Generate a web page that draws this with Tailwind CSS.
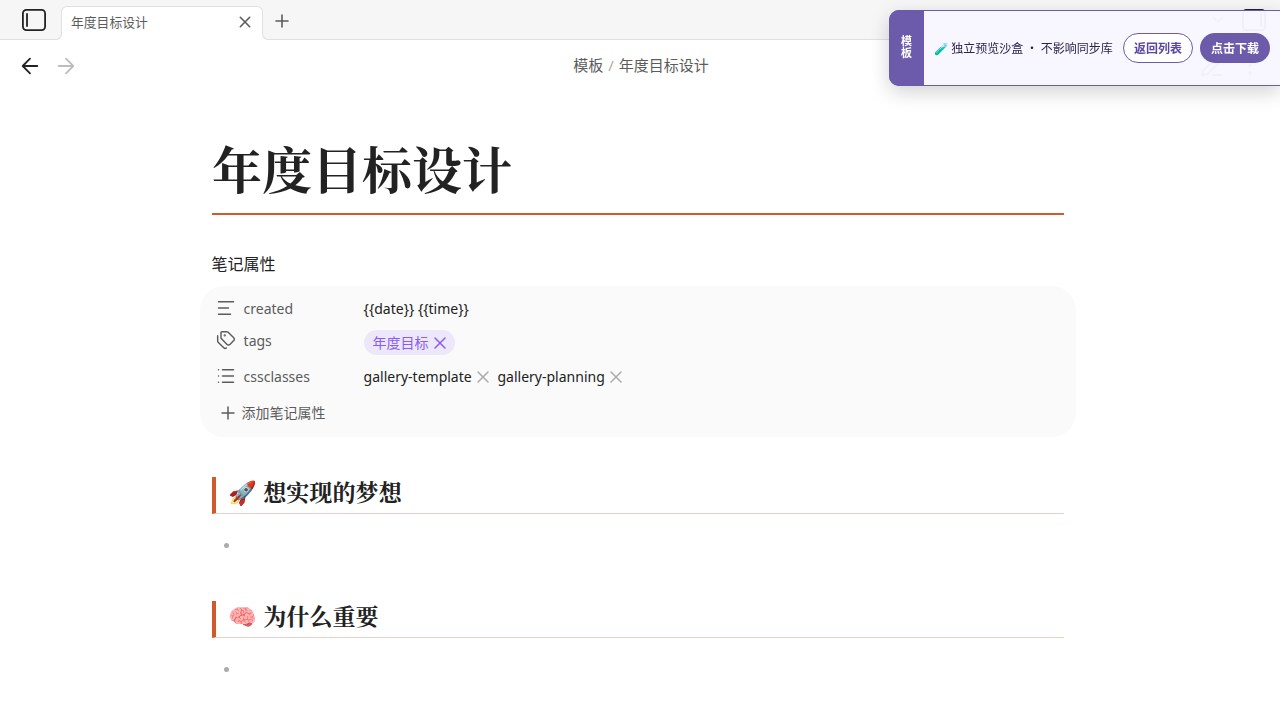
<!DOCTYPE html>
<html lang="zh-CN">

<head>
    <meta charset="UTF-8">
    <meta name="viewport" content="width=device-width, initial-scale=1.0">
    <title>年度目标设计</title>
    <script src="https://cdn.jsdelivr.net/npm/@tailwindcss/browser@4"></script>
</head>

<body class="h-screen overflow-hidden bg-white text-[#222222] font-['Noto_Sans','Noto_Sans_CJK_SC',sans-serif]">

    <!-- Tab bar -->
    <header class="flex h-10 items-end border-b border-[#e0e0e0] bg-[#f6f6f6]">
        <button class="mb-[6px] ml-[21px] h-[26px] w-[26px]">
            <svg class="h-[26px] w-[26px]" viewBox="0 0 26 26" fill="none" stroke="#222" stroke-width="1.8" stroke-linecap="round">
                <rect x="1.9" y="2.9" width="22.2" height="20.2" rx="3.5" />
                <path d="M6 7v12" />
            </svg>
        </button>
        <div class="relative -mb-px ml-[14px] flex h-[34px] w-[202px] items-center justify-between rounded-t-md border border-b-0 border-[#e0e0e0] bg-white pb-[2px] pl-[9px] pr-[9px] text-[12.8px] text-[#5c5c5c]">
            <span class="absolute -left-[7px] bottom-0 h-[7px] w-[7px] overflow-hidden bg-white"><span class="absolute -left-px -top-px h-[8px] w-[8px] rounded-br-md border-b border-r border-[#e0e0e0] bg-[#f6f6f6]"></span></span>
            <span class="absolute -right-[7px] bottom-0 h-[7px] w-[7px] overflow-hidden bg-white"><span class="absolute -right-px -top-px h-[8px] w-[8px] rounded-bl-md border-b border-l border-[#e0e0e0] bg-[#f6f6f6]"></span></span>
            <span class="pb-px leading-5">年度目标设计</span>
            <svg class="mb-[2px] h-4 w-4" viewBox="0 0 16 16" fill="none" stroke="#5c5c5c" stroke-width="1.6" stroke-linecap="round">
                <path d="M3.3 3.3l9.4 9.4M12.7 3.3l-9.4 9.4" />
            </svg>
        </div>
        <button class="mb-[10px] ml-[11px]">
            <svg class="h-[16px] w-[16px]" viewBox="0 0 16 16" fill="none" stroke="#5c5c5c" stroke-width="1.6" stroke-linecap="round">
                <path d="M2 8h12M8 2v12" />
            </svg>
        </button>
        <svg class="mb-[6px] ml-auto h-6 w-6" viewBox="0 0 24 24" fill="none" stroke="#5c5c5c" stroke-width="1.5">
            <path d="M5 8l5 5 5-5" />
        </svg>
        <svg class="mb-[6px] ml-[9px] mr-[13px] h-[26px] w-[26px]" viewBox="0 0 26 26" fill="none" stroke="#222" stroke-width="1.8" stroke-linecap="round">
            <rect x="1.9" y="2.9" width="22.2" height="20.2" rx="3.5" />
            <path d="M20 7v12" />
        </svg>
    </header>

    <!-- View header -->
    <nav class="grid h-[52px] grid-cols-3 items-center px-5">
        <div class="flex items-center gap-4">
            <svg class="h-5 w-5" viewBox="0 0 20 20" fill="none" stroke="#222" stroke-width="1.8" stroke-linecap="round" stroke-linejoin="round">
                <path d="M17.3 10H2.7M10 2.7L2.7 10l7.3 7.3" />
            </svg>
            <svg class="h-5 w-5" viewBox="0 0 20 20" fill="none" stroke="#bdbdbd" stroke-width="1.8" stroke-linecap="round" stroke-linejoin="round">
                <path d="M2.7 10h14.6M10 2.7l7.3 7.3-7.3 7.3" />
            </svg>
        </div>
        <div class="flex justify-center gap-[5px] pb-[2px] pl-[2px] text-[15px] text-[#5c5c5c]">
            <span>模板</span><span class="text-[#ababab]">/</span><span>年度目标设计</span>
        </div>
        <div class="flex items-center justify-end gap-[16px]">
            <svg class="h-6 w-6" viewBox="0 0 24 24" fill="none" stroke="#5c5c5c" stroke-width="1.8" stroke-linejoin="round" stroke-linecap="round">
                <path d="M13 21h9M17.500 3.500a2.500 2.500 0 0 1 3.500 3.500L7.500 20l-5.500 1.500 1.500-5.500z" />
            </svg>
            <svg class="h-5 w-5" viewBox="0 0 20 20" fill="#5c5c5c">
                <circle cx="10" cy="2" r="1.800" />
                <circle cx="10" cy="9.500" r="1.800" />
                <circle cx="10" cy="17" r="1.800" />
            </svg>
        </div>
    </nav>

    <!-- Note -->
    <main class="ml-[212px] w-[852px] pt-[43px]">
        <h1 class="h-20 border-b-2 border-[#d05a2c] font-['Noto_Serif_CJK_SC','Noto_Serif_SC',serif] text-[50px] font-bold leading-[65px]">年度目标设计</h1>

        <div class="-ml-[0.4px] mt-[37px] text-base leading-6">笔记属性</div>
        <section class="-mx-3 mt-[10.25px] h-[150.5px] rounded-3xl bg-[#fafafa] pl-4 pt-[5.75px] text-[14px]">
            <div class="flex h-8 items-center">
                <svg class="mr-[7.6px] h-5 w-5" viewBox="0 0 20 20" fill="none" stroke="#5c5c5c" stroke-width="1.5" stroke-linecap="round">
                    <path d="M2.500 3.700h15M2.500 10h10M2.500 16.300h12" />
                </svg>
                <span class="w-[120px] text-[#5c5c5c]">created</span>
                <span>{{date}} {{time}}</span>
            </div>
            <div class="flex h-9 items-start">
                <svg class="mr-[7.6px] mt-[6px] h-5 w-5" viewBox="0 0 24 24" fill="none" stroke="#5c5c5c" stroke-width="1.75" stroke-linecap="round" stroke-linejoin="round">
                    <path d="M13.172 2a2 2 0 0 1 1.414.586l6.710 6.710a2.400 2.400 0 0 1 0 3.408l-4.592 4.592a2.400 2.400 0 0 1-3.408 0l-6.710-6.710A2 2 0 0 1 6 9.172V3a1 1 0 0 1 1-1z" />
                    <path d="M2 7v6.172a2 2 0 0 0 .586 1.414l6.710 6.710a2.400 2.400 0 0 0 3.191.193" />
                    <circle cx="10.500" cy="6.500" r=".5" fill="#5c5c5c" />
                </svg>
                <span class="w-[120px] pt-px leading-8 text-[#5c5c5c]">tags</span>
                <span class="mt-[6px] flex h-[25px] w-[91px] items-center gap-[3px] rounded-full bg-[#ede8f9] pl-[9px] text-[#8a5cf5]">年度目标
                    <svg class="h-4 w-4" viewBox="0 0 16 16" fill="none" stroke="#8a5cf5" stroke-width="1.500" stroke-linecap="round">
                        <path d="M3 3l10 10M13 3L3 13" />
                    </svg>
                </span>
            </div>
            <div class="flex h-8 items-center">
                <svg class="mr-[7.6px] h-5 w-5" viewBox="0 0 20 20" fill="none" stroke="#5c5c5c" stroke-width="1.5" stroke-linecap="round">
                    <path d="M6.500 3.700h11M6.500 10h11M6.500 16.300h11M2.500 3.700h.01M2.500 10h.01M2.500 16.300h.01" />
                </svg>
                <span class="w-[120px] text-[#5c5c5c]">cssclasses</span>
                <span>gallery-template</span>
                <svg class="ml-[3px] mr-[6.8px] mt-[2px] h-4 w-4" viewBox="0 0 16 16" fill="none" stroke="#ababab" stroke-width="1.500" stroke-linecap="round">
                    <path d="M3 3l10 10M13 3L3 13" />
                </svg>
                <span>gallery-planning</span>
                <svg class="ml-[3px] mt-[2px] h-4 w-4" viewBox="0 0 16 16" fill="none" stroke="#ababab" stroke-width="1.500" stroke-linecap="round">
                    <path d="M3 3l10 10M13 3L3 13" />
                </svg>
            </div>
            <div class="mt-1 flex h-8 items-center gap-[5.6px] pl-1 text-[#5c5c5c]">
                <svg class="mt-[2px] h-4 w-4" viewBox="0 0 16 16" fill="none" stroke="#5c5c5c" stroke-width="1.500" stroke-linecap="round">
                    <path d="M2 8h12M8 2v12" />
                </svg>
                添加笔记属性
            </div>
        </section>

        <h2 class="mt-[40.25px] h-[37px] whitespace-pre border-b border-l-4 border-b-[#f0d0c6] border-l-[#d05a2c] pl-[12.4px] font-['Noto_Serif_CJK_SC','Noto_Serif_SC',serif] text-[23.1px] font-bold leading-[28px]">🚀 想实现的梦想</h2>
        <ul class="pl-3 pt-[29px]">
            <li class="h-[5px] w-[5px] rounded-full bg-[#ababab]"></li>
        </ul>

        <h2 class="mt-[53px] h-[37px] whitespace-pre border-b border-l-4 border-b-[#f0d0c6] border-l-[#d05a2c] pl-[12.4px] font-['Noto_Serif_CJK_SC','Noto_Serif_SC',serif] text-[23.1px] font-bold leading-[28px]">🧠 为什么重要</h2>
        <ul class="pl-3 pt-[29px]">
            <li class="h-[5px] w-[5px] rounded-full bg-[#ababab]"></li>
        </ul>
    </main>

    <!-- Floating template bar -->
    <aside class="fixed right-0 top-[10px] flex h-[76px] w-[391px] items-center rounded-l-[10px] border border-r-0 border-[#6c5aab] bg-[#f8f6ff]/96 text-[12px] text-[#2d2549] shadow-[0_6px_20px_rgba(0,0,0,0.18)]">
        <div class="-my-px -ml-px flex h-[76px] w-[35px] items-center justify-center rounded-l-[10px] bg-[#6c5aab] pb-[2px] text-[11px] font-bold leading-3 text-white">
            <span class="w-[11px]">模板</span>
        </div>
        <span class="ml-[9.6px] w-[189.4px] whitespace-nowrap font-['Noto_Sans_CJK_SC',sans-serif]">🧪 独立预览沙盒 ・ 不影响同步库</span>
        <button class="h-[30px] w-[70px] rounded-full border border-[#6c5aab] bg-white font-['Noto_Sans_CJK_SC',sans-serif] font-bold text-[#5a48a0]">返回列表</button>
        <button class="ml-[7px] h-[30px] w-[70px] rounded-full bg-[#6c5aab] font-['Noto_Sans_CJK_SC',sans-serif] font-bold text-white">点击下载</button>
    </aside>

</body>

</html>
